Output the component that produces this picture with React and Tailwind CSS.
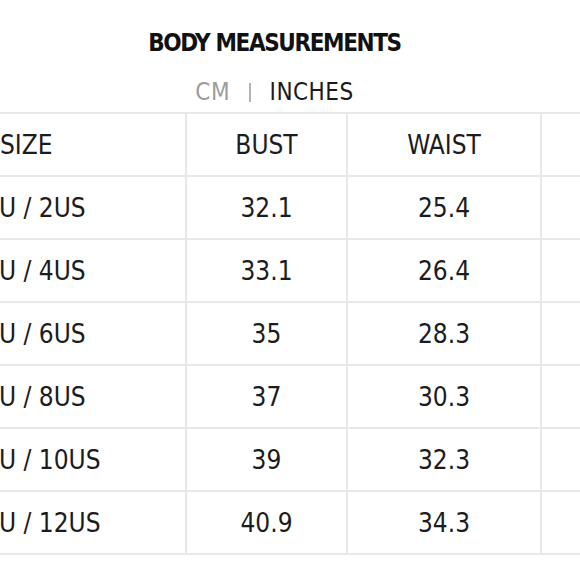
import React from "react";

const rows = [
  ["AU / 2US", "32.1", "25.4"],
  ["AU / 4US", "33.1", "26.4"],
  ["AU / 6US", "35", "28.3"],
  ["AU / 8US", "37", "30.3"],
  ["AU / 10US", "39", "32.3"],
  ["AU / 12US", "40.9", "34.3"],
];

function Row({ size, bust, waist, header }) {
  const cell = "h-[63px] border-b-2 border-r-2 border-[#e8e8e8] flex items-center";
  return (
    <>
      <div className={`${cell} justify-start ${header ? "pl-[20px]" : "pl-[3px]"}`}>
        <span className="leading-none whitespace-nowrap">{size}</span>
      </div>
      <div className={`${cell} justify-center`}>
        <span className="leading-none">{bust}</span>
      </div>
      <div className={`${cell} justify-center`}>
        <span className="leading-none">{waist}</span>
      </div>
      <div className={`${cell} justify-center`}></div>
    </>
  );
}

export default function App() {
  return (
    <div className="w-[580px] h-[580px] overflow-hidden bg-white font-[family-name:'DejaVu_Sans_Condensed','DejaVu_Sans',sans-serif] font-stretch-condensed">
      <div className="w-[549px] flex flex-col items-center pt-[31px]">
        <div className="text-[24px] leading-none font-bold tracking-[-1.4px] text-[#111] whitespace-nowrap">
          BODY MEASUREMENTS
        </div>
        <div className="mt-[25px] flex items-center text-[24px] leading-none tracking-[0.5px] whitespace-nowrap">
          <span className="text-[#9c9c9c]">CM</span>
          <span className="mx-[19px] w-[1.5px] h-[19px] bg-[#b4b4b4]"></span>
          <span className="text-[#1a1a1a]">INCHES</span>
        </div>
      </div>
      <div className="mt-[8px] ml-[-20px] w-[760px] border-t-2 border-[#e8e8e8] grid grid-cols-[207px_161px_194px_198px] text-[26px] text-[#1c1c1c]">
        <Row size="SIZE" bust="BUST" waist="WAIST" header />
        {rows.map((r) => (
          <Row key={r[0]} size={r[0]} bust={r[1]} waist={r[2]} />
        ))}
      </div>
    </div>
  );
}
